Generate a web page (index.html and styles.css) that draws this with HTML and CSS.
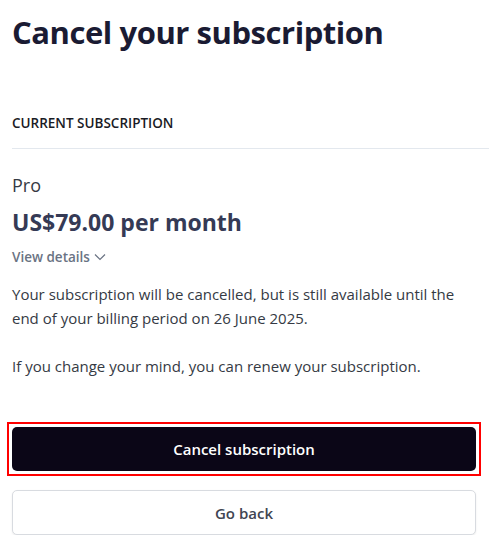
FILE: index.html
```html
<!DOCTYPE html>
<html lang="en">
<head>
<meta charset="utf-8">
<title>Cancel your subscription</title>
<link rel="stylesheet" href="styles.css">
</head>
<body>
<main class="page">
  <h1 class="title">Cancel your subscription</h1>
  <section class="current">
    <h2 class="section-label">CURRENT SUBSCRIPTION</h2>
    <div class="plan">
      <div class="plan-name">Pro</div>
      <div class="plan-price">US$79.00 per month</div>
      <button class="details" type="button">View details
        <svg class="chev" width="12" height="8" viewBox="0 0 12 8" aria-hidden="true"><path d="M1 1.5 L6 6.5 L11 1.5" fill="none" stroke="currentColor" stroke-width="1.2"/></svg>
      </button>
    </div>
    <p class="note">Your subscription will be cancelled, but is still available until the end of your billing period on 26 June 2025.</p>
    <p class="note">If you change your mind, you can renew your subscription.</p>
  </section>
  <div class="actions">
    <div class="highlight">
      <button class="btn btn-primary" type="button">Cancel subscription</button>
    </div>
    <button class="btn btn-secondary" type="button">Go back</button>
  </div>
</main>
</body>
</html>
```

FILE: styles.css
```css
* { box-sizing: border-box; }
html, body { margin: 0; padding: 0; background: #ffffff; }
body {
  font-family: "Open Sans", "Noto Sans", "Liberation Sans", sans-serif;
  color: #353a44;
}
.page {
  padding: 10px 13px 0 12px;
  display: flex;
  flex-direction: column;
}
.title {
  margin: 0;
  font-size: 31px;
  line-height: 44px;
  font-weight: 700;
  color: #1a1b33;
  letter-spacing: -0.45px;
}
.current { margin-top: 60px; margin-right: -13px; }
.section-label {
  margin: 0;
  font-size: 13.5px;
  font-weight: 600;
  line-height: 18px;
  color: #1a1b25;
  padding-bottom: 16px;
  border-bottom: 1px solid #e3e8ee;
}
.plan { margin-top: 24px; margin-right: 13px; display: flex; flex-direction: column; align-items: flex-start; }
.plan-name { font-size: 18px; line-height: 24px; color: #353a44; }
.plan-price { margin-top: 10px; font-size: 23px; line-height: 30px; font-weight: 700; color: #353a55; }
.details {
  margin-top: 10px;
  padding: 0;
  border: 0;
  background: none;
  font: inherit;
  font-size: 13.5px;
  font-weight: 600;
  line-height: 20px;
  color: #6a7383;
  display: flex;
  align-items: center;
  gap: 4px;
}
.chev { display: block; }
.note {
  margin: 15px 13px 0 0;
  font-size: 15px;
  line-height: 24px;
  color: #353a44;
}
.note + .note { margin-top: 24px; }
.actions {
  margin-top: 49px;
  display: flex;
  flex-direction: column;
  gap: 19px;
}
.highlight {
  margin: -5px;
  padding: 3px;
  border: 2px solid #ff0000;
  display: flex;
  flex-direction: column;
}
.btn {
  height: 44px;
  font: inherit;
  font-size: 15px;
  font-weight: 600;
  border-radius: 5px;
  cursor: pointer;
}
.btn-primary {
  background: #0b0617;
  color: #ffffff;
  border: 0;
}
.btn-secondary {
  height: 45px;
  background: #ffffff;
  color: #414552;
  border: 1px solid #d8dbe0;
  box-shadow: 0 1px 2px rgba(0,0,0,0.08);
}
```
